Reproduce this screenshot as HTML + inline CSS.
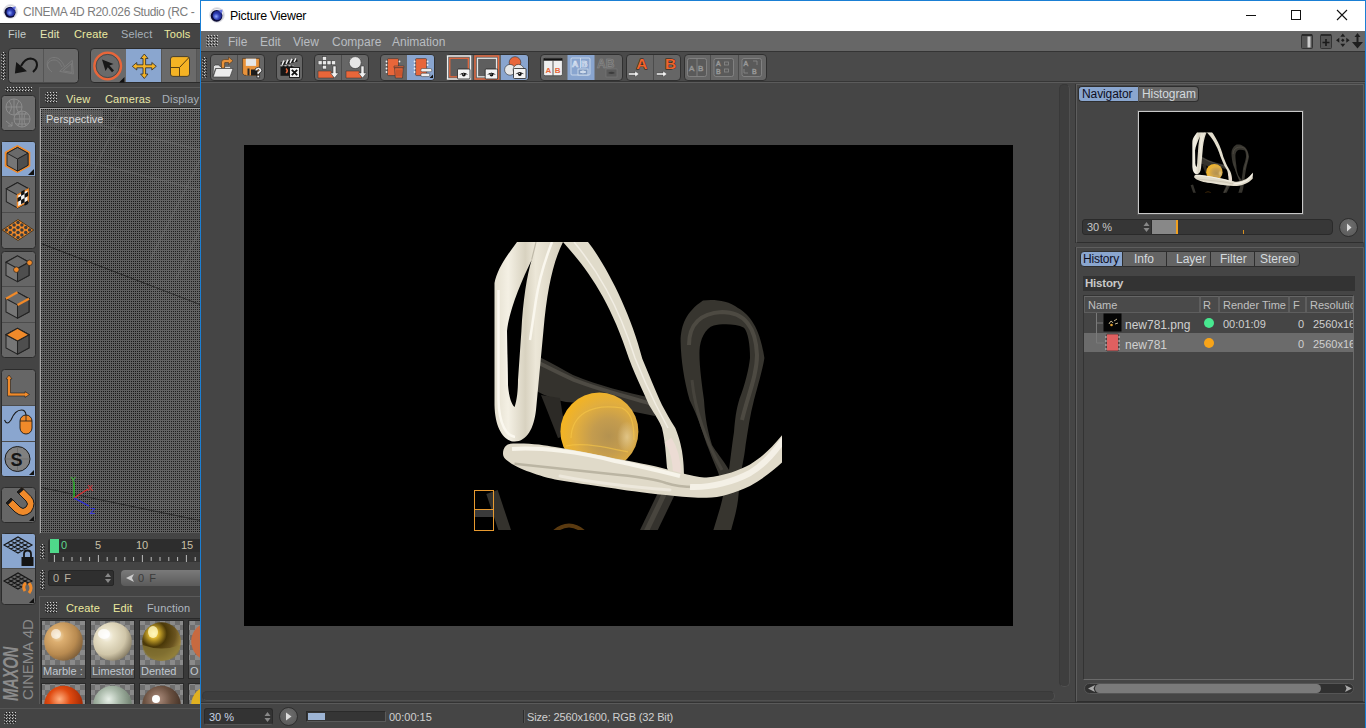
<!DOCTYPE html>
<html><head><meta charset="utf-8">
<style>
*{margin:0;padding:0;box-sizing:border-box}
html,body{width:1366px;height:728px;overflow:hidden;background:#3b3b3b;font-family:"Liberation Sans",sans-serif;font-size:12px}
.a{position:absolute}
.t{position:absolute;white-space:nowrap;line-height:1}
.pvm{color:#b9bdc1;font-size:12px}
.hatch{background:repeating-linear-gradient(135deg,#cfcfcf 0 1px,#2a2a2a 1px 2.4px)}
.hatchv{background:repeating-linear-gradient(135deg,#bdbdbd 0 1px,#333 1px 2.6px)}
</style></head><body>
<svg width="0" height="0" style="position:absolute"><defs><pattern id="hp" width="3" height="3" patternUnits="userSpaceOnUse"><rect x="2" y="0" width="1" height="1" fill="#d4d4d4"/><rect x="1" y="1" width="1" height="1" fill="#1c1c1c"/><rect x="0" y="2" width="1" height="1" fill="#9a9a9a"/></pattern></defs></svg>
<!-- LEFT C4D WINDOW -->
<div class="a" style="left:0;top:0;width:200px;height:23px;background:#fff"></div>
<svg class="a" style="left:2px;top:2.5px" width="17" height="17" viewBox="0 0 18 18">
  <circle cx="9" cy="9" r="7.4" fill="url(#ring)" stroke="#d0d0d8" stroke-width="0.6"/>
  <circle cx="8.6" cy="9.8" r="5.9" fill="#0c0c38"/>
  <circle cx="9.3" cy="9.4" r="4.6" fill="url(#eye)"/>
  <path d="M10.5 4.6 L14.6 3.6 L13.8 7.8Z" fill="#6a78e0"/>
</svg>
<div class="t" style="left:23px;top:5.6px;font-size:12px;color:#7c7c7c;letter-spacing:-0.38px">CINEMA 4D R20.026 Studio (RC - </div>
<div class="a" style="left:0;top:23px;width:200px;height:705px;background:#444"></div><div class="a" style="left:0;top:23px;width:200px;height:1px;background:#303030"></div>
<!-- menu -->
<div class="t" style="left:8px;top:29px;font-size:11px;letter-spacing:0.15px;color:#c5cdcc">File</div>
<div class="t" style="left:40px;top:29px;font-size:11px;letter-spacing:0.15px;color:#e6e6b4">Edit</div>
<div class="t" style="left:74px;top:29px;font-size:11px;letter-spacing:0.15px;color:#eceba0">Create</div>
<div class="t" style="left:121px;top:29px;font-size:11px;letter-spacing:0.15px;color:#a7b0b8">Select</div>
<div class="t" style="left:164px;top:29px;font-size:11px;letter-spacing:0.15px;color:#ecea9e">Tools</div>
<!-- toolbar -->
<svg class="a" style="left:1px;top:52px" width="5" height="28" shape-rendering="crispEdges"><rect width="5" height="28" fill="url(#hp)"/></svg>
<svg class="a" style="left:0;top:44px" width="200" height="44" viewBox="0 0 200 44">
  <g fill="#6a6a6a" stroke="#2c2c2c" stroke-width="1">
    <rect x="8.5" y="4.5" width="70" height="34.5" rx="3.5"/>
    <rect x="90.5" y="4.5" width="120" height="34" rx="3.5"/>
  </g>
  <path d="M43.5 5 V38" stroke="#555"/>
  <rect x="126" y="5" width="35" height="33" fill="#8aa6cf"/>
  <path d="M161.5 5 V38 M196.5 5 V38" stroke="#555"/>
  <!-- undo -->
  <path d="M14.9 29.5 L16.2 17.9 L27 27.3Z" fill="#151515"/>
  <path d="M21 22 Q25 14.5 30.5 14.5 Q37 15 37 21 Q37 24.5 33 28" fill="none" stroke="#151515" stroke-width="2"/>
  <!-- redo disabled -->
  <path d="M52 28 C44 22 47 13.5 54 13.5 C59 13.5 62 17 64.5 22.5 M49.5 25.5 C45 21 49 16 54 16 C58 16 60 19 62 23" fill="none" stroke="#7d7d7d" stroke-width="0.9"/>
  <path d="M72.3 16.3 L73.4 30 L59.7 27.3Z M71.5 19.5 L72 28.5 L63 26.8Z" fill="none" stroke="#7d7d7d" stroke-width="0.9"/>
  <!-- select -->
  <circle cx="107.7" cy="22" r="13.2" fill="none" stroke="#e8663a" stroke-width="2.6"/>
  <circle cx="107.7" cy="22" r="11.6" fill="none" stroke="#3a3a3a" stroke-width="0.7"/>
  <path d="M102 15.5 L113.5 20 L109.5 21.5 L114 26.5 L112 28.3 L107.8 23.3 L105.5 27Z" fill="#181818"/>
  <path d="M124.5 38.5 V33 L119 38.5Z" fill="#111"/>
  <!-- move -->
  <path d="M144.3 10 L148 14.5 H145.6 V20.8 H151.8 V18.5 L156.3 22.3 L151.8 26 V23.8 H145.6 V30 H148 L144.3 34.5 L140.6 30 H143 V23.8 H136.8 V26 L132.3 22.3 L136.8 18.5 V20.8 H143 V14.5 H140.6Z" fill="#f5b324" stroke="#2a2a2a" stroke-width="0.8"/>
  <!-- scale -->
  <rect x="170.5" y="12.6" width="19" height="19.8" rx="2.5" fill="#f5b324" stroke="#2a2a2a" stroke-width="0.8"/>
  <path d="M171 23.5 H179.5 V32 M179.5 23.5 L189 13.5" stroke="#5a4010" stroke-width="1" fill="none"/>
  <rect x="197" y="5" width="3" height="33" fill="#5d5d5d"/>
</svg>
<!-- left icon column -->
<svg class="a" style="left:5px;top:87px" width="27" height="5" shape-rendering="crispEdges"><rect width="27" height="5" fill="url(#hp)"/></svg>
<svg class="a" style="left:0;top:88px" width="40" height="520" viewBox="0 88 40 520">
  <defs>
    <g id="cube"><path d="M0 -11 L10 -5.5 V6 L0 11.5 L-10 6 V-5.5Z" fill="#767676" stroke="#222" stroke-width="0.9"/><path d="M-10 -5.5 L0 0 L10 -5.5 L0 -11Z" fill="#6a6a6a" stroke="#222" stroke-width="0.9"/><path d="M0 0 V11.5 L10 6 V-5.5Z" fill="#4e4e4e" stroke="#222" stroke-width="0.9"/></g>
  </defs>
  <!-- globe -->
  <rect x="1.5" y="95.5" width="34" height="35" rx="3" fill="#6e6e6e" stroke="#2c2c2c"/>
  <g fill="none" stroke="#8c8c8c" stroke-width="1">
    <circle cx="14" cy="107" r="8"/><path d="M6 107 H22 M14 99 V115 M9 101 Q14 107 9 113 M19 101 Q14 107 19 113"/>
    <circle cx="22" cy="119" r="8"/><path d="M14 119 H30 M22 111 V127 M16 114 H28 M16 124 H28 M18 112 Q22 119 18 126 M26 112 Q22 119 26 126"/>
    <path d="M6 121 L12 126 M8 126 H12 V122"/>
  </g>
  <!-- group A -->
  <rect x="1.5" y="141.5" width="34" height="107" rx="3" fill="#666" stroke="#2c2c2c"/>
  <path d="M2 142 H33 Q35 142 35 144 V176 H2Z" fill="#8aa6cf"/>
  <path d="M2 176.5 H35 M2 212.5 H35" stroke="#4c4c4c"/>
  <g transform="translate(17.5,159)"><path d="M0 -14 L12.8 -7 V7.2 L0 14.3 L-12.8 7.2 V-7Z" fill="#f08a2a" /><use href="#cube" transform="scale(1.05)"/></g>
  <path d="M34 175 V169 L28 175Z" fill="#111"/>
  <g transform="translate(17.5,195)" ><g transform="scale(1.12)"><use href="#cube"/>
    <path d="M0 0 V11 L9.5 5.7 V-5.2Z" fill="#f4f4f4" stroke="#f08a2a" stroke-width="1.3"/>
    <path d="M0 2.6 L3.2 0.8 V4.5 L0 6.3Z M6.3 -1 L9.5 -2.8 V0.9 L6.3 2.7Z M3.2 4.5 L6.3 2.7 V6.4 L3.2 8.2Z M3.2 -2.8 L6.3 -4.6 V-1 L3.2 0.8Z M6.3 6.4 L9.5 4.6 V8 L6.3 9.7Z" fill="#111"/>
  </g></g>
  <g transform="translate(18,230)">
    <path d="M0 -10.5 L15.8 0 L0 10.5 L-15.8 0Z" fill="#f08a2a" stroke="#3a2a10" stroke-width="0.8"/>
    <g fill="#3c3c3c"><circle cx="0.00" cy="-7.50" r="1.75"/><circle cx="-3.88" cy="-5.00" r="1.75"/><circle cx="-7.75" cy="-2.50" r="1.75"/><circle cx="-11.62" cy="0.00" r="1.75"/><circle cx="3.88" cy="-5.00" r="1.75"/><circle cx="0.00" cy="-2.50" r="1.75"/><circle cx="-3.88" cy="0.00" r="1.75"/><circle cx="-7.75" cy="2.50" r="1.75"/><circle cx="7.75" cy="-2.50" r="1.75"/><circle cx="3.88" cy="0.00" r="1.75"/><circle cx="0.00" cy="2.50" r="1.75"/><circle cx="-3.88" cy="5.00" r="1.75"/><circle cx="11.62" cy="0.00" r="1.75"/><circle cx="7.75" cy="2.50" r="1.75"/><circle cx="3.88" cy="5.00" r="1.75"/><circle cx="0.00" cy="7.50" r="1.75"/></g>
  </g>
  <!-- group B -->
  <rect x="1.5" y="251.5" width="34" height="106" rx="3" fill="#666" stroke="#2c2c2c"/>
  <path d="M2 286.5 H35 M2 322.5 H35" stroke="#4c4c4c"/>
  <g transform="translate(17.5,268.5) scale(1.15)"><use href="#cube"/><circle cx="-1" cy="1" r="2.4" fill="#f08a2a" stroke="#222" stroke-width="0.6"/><circle cx="10.5" cy="-5" r="2.4" fill="#f08a2a" stroke="#222" stroke-width="0.6"/></g>
  <g transform="translate(17.5,305) scale(1.15)"><use href="#cube"/><path d="M-10 -5.5 L0 -11" stroke="#f08a2a" stroke-width="2"/><path d="M0 0 L10 -5.5" stroke="#f08a2a" stroke-width="2"/></g>
  <g transform="translate(17.5,341) scale(1.15)"><use href="#cube"/><path d="M-10 -5.5 L0 0 L10 -5.5 L0 -11Z" fill="#f08a2a" stroke="#222" stroke-width="0.9"/></g>
  <!-- group C -->
  <rect x="1.5" y="369.5" width="34" height="107" rx="3" fill="#666" stroke="#2c2c2c"/>
  <path d="M2 405 H35 V476 H4 Q2 476 2 474Z" fill="#8aa6cf"/>
  <path d="M2 405.5 H35 M2 441.5 H35" stroke="#4c4c4c"/>
  <path d="M9 375 L12 379 H10.5 V393 H25 V391.5 L29.5 394.5 L25 397.5 V396 H7.5 V379 H6Z" fill="#f08a2a" stroke="#2a2a2a" stroke-width="0.7"/>
  <path d="M4.5 420 Q7 426 11 420 Q15 410 21.5 410 Q25.5 410 26 415" fill="none" stroke="#1a1a1a" stroke-width="1.1"/>
  <rect x="20" y="415" width="12" height="19" rx="6" fill="#f08a2a" stroke="#1a1a1a" stroke-width="0.9"/>
  <path d="M20 421 H32 M26 415 V421" stroke="#1a1a1a" stroke-width="0.8"/>
  <circle cx="17.5" cy="459" r="12.5" fill="#808080" stroke="#1a1a1a" stroke-width="1"/>
  <path d="M17.5 447 V471 M5.5 459 H29.5" stroke="#6a6a6a" stroke-width="0.8"/>
  <text x="10.5" y="466" font-family="Liberation Sans" font-weight="bold" font-size="18" fill="#161616">S</text>
  <path d="M34 475 V470 L29 475Z" fill="#111"/>
  <!-- magnet -->
  <rect x="1.5" y="487.5" width="34" height="35" rx="3" fill="#666" stroke="#2c2c2c"/>
  <path d="M6 503 L11 498 L20 507 Q23 510 26 507 Q29 504 26 501 L17 492 L22 487.5 L31 496.5 Q37 503 31 512 Q23 519 15 512Z" fill="#f08a2a" stroke="#1a1a1a" stroke-width="1"/>
  <path d="M6 503 L11 498 L13 500 L8 505Z M17 492 L22 487.5 L24 489.5 L19 494Z" fill="#1a1a1a"/>
  <path d="M34 521 V516 L29 521Z" fill="#111"/>
  <!-- group D -->
  <rect x="1.5" y="533.5" width="34" height="71" rx="3" fill="#666" stroke="#2c2c2c"/>
  <path d="M2 534 H33 Q35 534 35 536 V568 H2Z" fill="#8aa6cf"/>
  <path d="M2 568.5 H35" stroke="#4c4c4c"/>
  <g fill="none" stroke="#151515" stroke-width="1.1">
    <path d="M4 545 L18 537 L32 545 L18 553Z M7.5 543 L21.5 551 M11 541 L25 549 M14.5 539 L28.5 547 M7.5 547 L21.5 539 M11 549 L25 541 M14.5 551 L28.5 543"/>
    <path d="M4 581 L18 573 L32 581 L18 589Z M7.5 579 L21.5 587 M11 577 L25 585 M14.5 575 L28.5 583 M7.5 583 L21.5 575 M11 585 L25 577 M14.5 587 L28.5 579"/>
  </g>
  <path d="M24 558 V554 Q24 550.5 27.5 550.5 Q31 550.5 31 554 V558" fill="none" stroke="#151515" stroke-width="1.8"/>
  <rect x="21.5" y="557" width="12" height="9" fill="#151515"/>
  <path d="M25 591 Q22 586 26 583" fill="none" stroke="#f08a2a" stroke-width="3"/>
  <path d="M29 583 Q33 588 29 593" fill="none" stroke="#f08a2a" stroke-width="3"/>
  <path d="M34 603 V598 L29 603Z" fill="#111"/>
</svg>
<!-- MAXON logo -->
<div class="t" style="left:0px;top:701px;transform-origin:0 0;transform:rotate(-90deg) scale(0.68,1);font-size:22px;font-weight:bold;font-style:italic;color:#8c8c8c;letter-spacing:-0.5px">MAXON</div>
<div class="t" style="left:20px;top:700px;transform-origin:0 0;transform:rotate(-90deg);font-size:15px;color:#8a8a8a">CINEMA 4D</div>

<!-- viewport panel -->
<div class="a" style="left:39px;top:87px;width:161px;height:447px;background:#444;border-top:1px solid #5a5a5a;border-left:1px solid #5a5a5a"></div>
<svg class="a" style="left:45px;top:92px" width="12" height="11" shape-rendering="crispEdges"><rect width="12" height="11" fill="url(#hp)"/></svg>
<div class="t" style="left:66px;top:94px;font-size:11px;letter-spacing:0.15px;color:#e9e8a8">View</div>
<div class="t" style="left:105px;top:94px;font-size:11px;letter-spacing:0.15px;color:#e9e8a8">Cameras</div>
<div class="t" style="left:162px;top:94px;font-size:11px;letter-spacing:0.15px;color:#a9b1b9">Display</div>
<div class="a" style="left:40px;top:107px;width:160px;height:1px;background:#2a2a2a"></div>
<div class="a" style="left:40px;top:108px;width:160px;height:425px;background:#a5a5a5"></div>
<svg class="a" style="left:41px;top:109px" width="159" height="424" viewBox="0 0 159 424" shape-rendering="crispEdges">
  <defs><pattern id="dots" width="2" height="2" patternUnits="userSpaceOnUse"><rect width="2" height="2" fill="#5f5f5f"/><rect width="1" height="1" fill="#161616"/></pattern></defs>
  <rect width="159" height="424" fill="url(#dots)"/>
</svg>
<svg class="a" style="left:41px;top:109px" width="159" height="424" viewBox="0 0 159 424">
  <path d="M0 134.5 L159 195.5" stroke="#1a1a1a" stroke-width="1" opacity="0.75"/>
  <path d="M0 378.5 L159 411.5" stroke="#1a1a1a" stroke-width="1" opacity="0.65"/>
  <rect x="110" y="0" width="49" height="400" fill="#ffffff" opacity="0.035"/>
  <g stroke="#8a8a8a" stroke-width="1.6" opacity="0.22" fill="none">
    <path d="M1 41 L159 81 M59 16 L159 41 M80 3 L19 136 M159 51 L109 151 M159 120 L135 170"/>
  </g>
  <path d="M33 389 V373" stroke="#1fd01f" stroke-width="1.2"/>
  <path d="M33 389 L47 380" stroke="#e02a2a" stroke-width="1.2"/>
  <path d="M33 389 L48 397" stroke="#2a2ae8" stroke-width="1.2"/>
  <text x="29.5" y="373" font-family="Liberation Sans" font-size="8" fill="#2fd02f">Y</text>
  <text x="46" y="382" font-family="Liberation Sans" font-size="9" fill="#e03030">X</text>
  <text x="49" y="405" font-family="Liberation Sans" font-size="9" fill="#3030f0">Z</text>
</svg>
<div class="a" style="left:43px;top:111px;width:60px;height:15px;background:rgba(100,100,100,0.55)"></div>
<div class="t" style="left:46px;top:114px;font-size:11px;color:#dcdcdc">Perspective</div>

<!-- timeline -->
<svg class="a" style="left:40px;top:544px" width="5" height="15" shape-rendering="crispEdges"><rect width="5" height="15" fill="url(#hp)"/></svg>
<div class="a" style="left:48px;top:539px;width:152px;height:23px;background:#2d2d2d;border-radius:3px 0 0 3px"></div>
<div class="a" style="left:48px;top:552px;width:152px;height:10px;background:#343434"></div>
<div class="a" style="left:50px;top:539px;width:9px;height:14px;background:#4fd88a"></div>
<div class="t" style="left:61px;top:540px;font-size:11px;color:#5fd890">0</div>
<div class="t" style="left:95px;top:540px;font-size:11px;color:#c8c0a8">5</div>
<div class="t" style="left:136px;top:540px;font-size:11px;color:#c8c0a8">10</div>
<div class="t" style="left:181px;top:540px;font-size:11px;color:#c8c0a8">15</div>
<svg class="a" style="left:48px;top:552px" width="152" height="10"><path d="M6.4 3 V10 M15.2 5 V9 M24.0 5 V9 M32.8 5 V9 M41.6 5 V9 M50.4 3 V10 M59.2 5 V9 M68.0 5 V9 M76.8 5 V9 M85.6 5 V9 M94.4 3 V10 M103.2 5 V9 M112.0 5 V9 M120.8 5 V9 M129.6 5 V9 M138.4 3 V10 M147.2 5 V9" stroke="#bbb" stroke-width="1"/></svg>
<!-- frame fields -->
<svg class="a" style="left:40px;top:570px" width="5" height="20" shape-rendering="crispEdges"><rect width="5" height="20" fill="url(#hp)"/></svg>
<div class="a" style="left:48px;top:570px;width:66px;height:16px;background:#2f2f2f;border:1px solid #262626;border-radius:2px"></div>
<div class="t" style="left:53px;top:573px;font-size:11px;color:#b9b0a0;letter-spacing:1px">0 F</div>
<svg class="a" style="left:104px;top:572px" width="8" height="12"><path d="M1 5 L4 1 L7 5Z M1 7 L4 11 L7 7Z" fill="#888"/></svg>
<div class="a" style="left:121px;top:570px;width:79px;height:16px;background:linear-gradient(#7a7a7a,#5a5a5a);border-radius:4px 0 0 4px"></div>
<svg class="a" style="left:124px;top:572px" width="12" height="12"><path d="M2 6 L10 2 L8 6 L10 10Z" fill="#ccc"/></svg>
<div class="t" style="left:138px;top:573px;font-size:11px;color:#3a3a3a;letter-spacing:1px">0 F</div>

<!-- material manager -->
<div class="a" style="left:39px;top:596px;width:161px;height:108px;background:#444;border-top:1px solid #5a5a5a;border-left:1px solid #5a5a5a"></div>
<svg class="a" style="left:45px;top:602px" width="12" height="11" shape-rendering="crispEdges"><rect width="12" height="11" fill="url(#hp)"/></svg>
<div class="t" style="left:66px;top:603px;font-size:11px;letter-spacing:0.15px;color:#ecea9e">Create</div>
<div class="t" style="left:113px;top:603px;font-size:11px;letter-spacing:0.15px;color:#ecea9e">Edit</div>
<div class="t" style="left:147px;top:603px;font-size:11px;letter-spacing:0.15px;color:#b0b8c0">Function</div>
<div class="a" style="left:40px;top:618px;width:160px;height:1px;background:#2a2a2a"></div>
<div class="a" style="left:40px;top:619px;width:160px;height:85px;background:#393939"></div>
<svg class="a" style="left:40px;top:619px" width="160" height="85" viewBox="40 619 160 85">
  <defs>
    <pattern id="chk" width="10" height="10" patternUnits="userSpaceOnUse"><rect width="10" height="10" fill="#6f6f6f"/><rect width="5" height="5" fill="#8a8a8a"/><rect x="5" y="5" width="5" height="5" fill="#8a8a8a"/></pattern>
    <radialGradient id="m1" cx="35%" cy="35%" r="70%"><stop offset="0" stop-color="#f4e0b8"/><stop offset="0.25" stop-color="#dcae70"/><stop offset="0.7" stop-color="#b88a50"/><stop offset="1" stop-color="#80603a"/></radialGradient>
    <radialGradient id="m2" cx="35%" cy="35%" r="70%"><stop offset="0" stop-color="#ffffff"/><stop offset="0.25" stop-color="#ebe4cc"/><stop offset="0.7" stop-color="#cfc5a8"/><stop offset="1" stop-color="#8a8068"/></radialGradient>
    <radialGradient id="m3" cx="30%" cy="30%" r="75%"><stop offset="0" stop-color="#fff2a0"/><stop offset="0.15" stop-color="#e0b830"/><stop offset="0.45" stop-color="#4a3808"/><stop offset="0.75" stop-color="#6a5420"/><stop offset="1" stop-color="#a08840"/></radialGradient>
    <radialGradient id="m4" cx="40%" cy="35%" r="70%"><stop offset="0" stop-color="#ffb080"/><stop offset="0.4" stop-color="#e04a10"/><stop offset="1" stop-color="#902000"/></radialGradient>
    <radialGradient id="m5" cx="40%" cy="35%" r="70%"><stop offset="0" stop-color="#e8f0e8"/><stop offset="0.4" stop-color="#a8b8a8"/><stop offset="1" stop-color="#607060"/></radialGradient>
    <radialGradient id="m6" cx="40%" cy="35%" r="70%"><stop offset="0" stop-color="#b09080"/><stop offset="0.5" stop-color="#6a5040"/><stop offset="1" stop-color="#3a2a20"/></radialGradient>
  </defs>
  <g stroke="#2a2a2a" stroke-width="1">
    <rect x="41.5" y="620.5" width="44" height="58" fill="url(#chk)"/>
    <rect x="90.5" y="620.5" width="44" height="58" fill="url(#chk)"/>
    <rect x="139.5" y="620.5" width="44" height="58" fill="url(#chk)"/>
    <rect x="188.5" y="620.5" width="44" height="58" fill="url(#chk)"/>
    <rect x="41.5" y="683.5" width="44" height="30" fill="url(#chk)"/>
    <rect x="90.5" y="683.5" width="44" height="30" fill="url(#chk)"/>
    <rect x="139.5" y="683.5" width="44" height="30" fill="url(#chk)"/>
    <rect x="188.5" y="683.5" width="44" height="30" fill="url(#chk)"/>
  </g>
  <g fill="#5a5a5a"><rect x="42" y="665" width="43" height="13"/><rect x="91" y="665" width="43" height="13"/><rect x="140" y="665" width="43" height="13"/><rect x="189" y="665" width="43" height="13"/></g>
  <circle cx="63.5" cy="641.5" r="19.3" fill="url(#m1)"/>
  <circle cx="112.5" cy="641.5" r="19.3" fill="url(#m2)"/>
  <circle cx="161.5" cy="641.5" r="19.3" fill="url(#m3)"/>
  <path d="M142.5 645 Q161.5 652 180.5 645 Q180 660 161.5 661 Q143 660 142.5 645Z" fill="#8a7a38" opacity="0.7"/>
  <circle cx="210.5" cy="641.5" r="19.3" fill="#c86a40"/>
  <ellipse cx="56" cy="634" rx="5" ry="5" fill="#fff" opacity="0.6"/>
  <ellipse cx="104" cy="634" rx="6" ry="5" fill="#fff" opacity="0.8"/>
  <ellipse cx="153" cy="632" rx="5" ry="6" fill="#fff8c0" opacity="0.8"/>
  <circle cx="63.5" cy="705" r="19.3" fill="url(#m4)"/>
  <circle cx="112.5" cy="705" r="19.3" fill="url(#m5)"/>
  <circle cx="161.5" cy="705" r="19.3" fill="url(#m6)"/>
  <circle cx="210.5" cy="705" r="19.3" fill="#e0b020"/>
  <ellipse cx="156" cy="699" rx="4" ry="4" fill="#fff"/>
</svg>
<div class="t" style="left:43px;top:666px;font-size:11px;color:#c0c8d0">Marble :</div>
<div class="t" style="left:92px;top:666px;font-size:11px;color:#c0c8d0;width:42px;overflow:hidden">Limestone</div>
<div class="t" style="left:141px;top:666px;font-size:11px;color:#c0c8d0">Dented</div>
<div class="t" style="left:190px;top:666px;font-size:11px;color:#c0c8d0">O</div>
<div class="a" style="left:0;top:704px;width:200px;height:24px;background:#444"></div>
<div class="a" style="left:0;top:708px;width:200px;height:1px;background:#555"></div>
<svg class="a" style="left:4px;top:712px" width="12" height="12" shape-rendering="crispEdges"><rect width="12" height="12" fill="url(#hp)"/></svg>
<!-- PV title bar -->
<div class="a" style="left:200px;top:0;width:1166px;height:728px;border:1px solid #1a7fd4;border-bottom:none;background:#454545"></div>
<div class="a" style="left:201px;top:1px;width:1164px;height:30px;background:#fff"></div>
<svg class="a" style="left:208px;top:6px" width="18" height="18" viewBox="0 0 18 18">
  <defs>
    <radialGradient id="ring" cx="50%" cy="50%" r="50%"><stop offset="70%" stop-color="#fff"/><stop offset="88%" stop-color="#cfd0d8"/><stop offset="100%" stop-color="#f4f4f4"/></radialGradient>
    <radialGradient id="eye" cx="38%" cy="62%" r="65%"><stop offset="0" stop-color="#90a8ff"/><stop offset="0.5" stop-color="#3040b8"/><stop offset="1" stop-color="#182080"/></radialGradient>
  </defs>
  <circle cx="9" cy="9" r="7.4" fill="url(#ring)" stroke="#d0d0d8" stroke-width="0.6"/>
  <circle cx="8.6" cy="9.8" r="5.9" fill="#0c0c38"/>
  <circle cx="9.3" cy="9.4" r="4.6" fill="url(#eye)"/>
  <path d="M10.5 4.6 L14.6 3.6 L13.8 7.8Z" fill="#6a78e0"/>
</svg>
<div class="t" style="left:230px;top:10px;font-size:12.4px;color:#000;letter-spacing:-0.25px">Picture Viewer</div>
<!-- window buttons -->
<div class="a" style="left:1246px;top:15px;width:10px;height:1px;background:#111"></div>
<div class="a" style="left:1291px;top:10px;width:10px;height:10px;border:1px solid #111"></div>
<svg class="a" style="left:1336px;top:9px" width="12" height="12" viewBox="0 0 12 12"><path d="M1 1 L11 11 M11 1 L1 11" stroke="#111" stroke-width="1.1"/></svg>

<!-- PV menu bar -->
<div class="a" style="left:201px;top:31px;width:1164px;height:20px;background:#676767"></div>
<svg class="a" style="left:206px;top:35px" width="12" height="12" shape-rendering="crispEdges"><rect width="12" height="12" fill="url(#hp)"/></svg>
<div class="t pvm" style="left:228px;top:36px">File</div>
<div class="t pvm" style="left:260px;top:36px">Edit</div>
<div class="t pvm" style="left:293px;top:36px">View</div>
<div class="t pvm" style="left:332px;top:36px">Compare</div>
<div class="t pvm" style="left:392px;top:36px">Animation</div>
<!-- right menu icons -->
<svg class="a" style="left:1298px;top:32px" width="68" height="18" viewBox="0 0 68 18">
  <rect x="3.5" y="2.5" width="11" height="14" rx="1" fill="#555" stroke="#333"/>
  <rect x="4" y="2" width="10" height="2" fill="#2a2a2a"/>
  <rect x="9.5" y="4.5" width="3" height="11" fill="#ccc"/>
  <rect x="22.5" y="2.5" width="11" height="14" rx="1" fill="#555" stroke="#333"/>
  <rect x="23" y="2" width="10" height="2" fill="#2a2a2a"/>
  <path d="M28 7 V14 M24.5 10.5 H31.5" stroke="#1a1a1a" stroke-width="1.6"/>
  <path d="M44.8 1.5 L47.3 4.8 L42.3 4.8Z M44.8 15 L47.3 11.7 L42.3 11.7Z M38 8.2 L41.3 5.7 L41.3 10.7Z M51.6 8.2 L48.3 5.7 L48.3 10.7Z M44.8 6.4 L46.6 8.2 L44.8 10 L43 8.2Z" fill="#1e1e1e"/>
  <path d="M59.5 1 L62.5 5 L60.5 5 V10 H65 L59.5 16.5 L54 10 H58.5 V5 H56.5Z" fill="#1e1e1e"/>
</svg>
<div class="a" style="left:201px;top:51px;width:1164px;height:1px;background:#343434"></div>

<!-- PV toolbar -->
<div class="a" style="left:201px;top:52px;width:1164px;height:29px;background:#4a4a4a"></div>
<div class="a" style="left:201px;top:81px;width:1164px;height:1px;background:#363636"></div>
<div class="a" style="left:201px;top:82px;width:1164px;height:1px;background:#5b5b5b"></div>
<svg class="a" style="left:202px;top:57px" width="5" height="21" shape-rendering="crispEdges"><rect width="5" height="21" fill="url(#hp)"/></svg>
<svg class="a" style="left:200px;top:51px" width="580" height="32" viewBox="0 0 580 32">
  <defs>
    <g id="eyebox"><rect x="0" y="0" width="12.5" height="10" rx="1" fill="#f4f4f4" stroke="#222" stroke-width="0.8"/><path d="M1.8 5.8 Q6.25 1.8 10.7 5.8 Q6.25 4 1.8 5.8Z" fill="#111"/><circle cx="6.3" cy="5.6" r="1.9" fill="#111"/><circle cx="5.8" cy="5" r="0.6" fill="#fff"/></g>
  </defs>
  <!-- group backgrounds -->
  <g fill="#666666" stroke="#303030" stroke-width="1">
    <rect x="10.5" y="3.5" width="54" height="26" rx="3.5"/>
    <rect x="76.5" y="3.5" width="26" height="26" rx="3.5"/>
    <rect x="114.5" y="3.5" width="54" height="26" rx="3.5"/>
    <rect x="180.5" y="3.5" width="54" height="26" rx="3.5"/>
    <rect x="246.5" y="3.5" width="82" height="26" rx="3.5"/>
    <rect x="340.5" y="3.5" width="82" height="26" rx="3.5"/>
    <rect x="426.5" y="3.5" width="54" height="26" rx="3.5"/>
    <rect x="484.5" y="3.5" width="82" height="26" rx="3.5"/>
  </g>
  <!-- highlighted buttons -->
  <path d="M207 4 H231 Q234 4 234 7 V26 Q234 29 231 29 H207 Z" fill="#89a5cf"/>
  <path d="M301 4 H325 Q328 4 328 7 V26 Q328 29 325 29 H301 Z" fill="#89a5cf"/>
  <rect x="367.5" y="4" width="27" height="25" fill="#89a5cf"/>
  <!-- dividers -->
  <g stroke="#4c4c4c" stroke-width="1">
    <path d="M37.5 4 V29 M141.5 4 V29 M273.5 4 V29 M453.5 4 V29 M510.5 4 V29 M538.5 4 V29"/>
  </g>
  <!-- open -->
  <g transform="translate(10,3)">
    <path d="M3 22.5 L3.5 12.5 L5 11 L9 11 L10 12.5 L11.5 12.5 V14.5 L5.5 14.5 Z" fill="#e2e2e2" stroke="#333" stroke-width="0.6"/><rect x="14.6" y="12.3" width="6" height="2.2" fill="#d6d6d6" stroke="#333" stroke-width="0.5"/>
    <path d="M11.5 14 V8.5 Q11.5 5.5 14.5 5.5 H18.5 V3 L23 6.8 L18.5 10.5 V8.5 H15 Q14.6 8.5 14.6 9 V14Z" fill="#e8923a" stroke="#3a2a1a" stroke-width="0.5"/>
    <path d="M3.2 23 L6 14.5 L23 14.5 L20 23 Z" fill="#ececec" stroke="#333" stroke-width="0.6"/>
  </g>
  <!-- save -->
  <g transform="translate(37,3)">
    <path d="M5.6 4.4 H22.4 V21.3 H7.5 L5.6 19.5 Z" fill="#e8923a" stroke="#3b2a1a" stroke-width="0.6"/>
    <rect x="8.8" y="4.6" width="10.3" height="7.3" fill="#e6e6e6"/>
    <rect x="9" y="14" width="10" height="7.3" fill="#e8923a"/>
    <rect x="10.5" y="14.5" width="2" height="6.8" fill="#2a2a2a"/>
    <rect x="14" y="15.5" width="6" height="6" fill="#1c1c1c"/>
    <path d="M17.8 16.8 Q17.8 13.3 21.3 13.3 Q24.8 13.3 24.8 16.3 Q24.8 18.3 22.6 19 V20.3 H20 V17.8 Q22.2 17.2 22.2 16.3 Q22.2 15.6 21.3 15.6 Q20.4 15.6 20.4 16.8Z M20 21.2 H22.6 V23.8 H20Z" fill="#f6f6f6" stroke="#111" stroke-width="0.7"/>
  </g>
  <!-- clapper -->
  <g transform="translate(76,3)">
    <path d="M4.5 8.5 L21 4.5 L21.5 7.5 L5 11.5Z" fill="#111"/>
    <path d="M6 10.8 L8 6.5 M10 9.8 L12 5.6 M14 8.8 L16 4.8 M18 7.8 L20 4.3" stroke="#eee" stroke-width="1.6"/>
    <rect x="4.5" y="11.8" width="13" height="10" fill="#151515"/>
    <path d="M4.5 11.8 H17.5" stroke="#eee" stroke-width="1" stroke-dasharray="2 2"/>
    <path d="M10 14.5 Q12.5 16.8 10 19" stroke="#e8663a" stroke-width="1.6" fill="none"/>
    <rect x="13.5" y="13.5" width="10" height="10" fill="#f2f2f2" stroke="#111" stroke-width="0.9"/>
    <path d="M15.8 15.8 L21.2 21.2 M21.2 15.8 L15.8 21.2" stroke="#111" stroke-width="1.8"/>
  </g>
  <!-- render region -->
  <g transform="translate(114,3)">
    <g fill="#e9e9e9" stroke="#333" stroke-width="0.5">
      <rect x="8.5" y="2.7" width="4" height="3.5"/><rect x="8.5" y="6.8" width="4" height="4"/><rect x="8.5" y="11.4" width="4" height="3.6"/>
      <rect x="4.1" y="6.8" width="4" height="4"/><rect x="13" y="6.8" width="4" height="4"/><rect x="17.6" y="6.8" width="4" height="4"/>
    </g>
    <path d="M4 17 H17 L20 24 H4Z" fill="#e8663a" stroke="#333" stroke-width="0.5"/>
    <path d="M19 12 H22 V19 H24.5 L20.5 24 L16.5 19 H19Z" fill="#f0f0f0" stroke="#333" stroke-width="0.5"/>
  </g>
  <g transform="translate(141,3)">
    <circle cx="14.2" cy="8.6" r="6" fill="#e6e6e6" stroke="#333" stroke-width="0.6"/>
    <path d="M5 17 H18 L21 24 H5Z" fill="#e8663a" stroke="#333" stroke-width="0.5"/>
    <path d="M20 12 H23 V19 H25.5 L21.5 24 L17.5 19 H20Z" fill="#f0f0f0" stroke="#333" stroke-width="0.5"/>
  </g>
  <!-- delete / export notebook -->
  <g transform="translate(180,3)">
    <rect x="7.5" y="4.6" width="11" height="17" rx="1" fill="#e8663a" stroke="#333" stroke-width="0.6"/>
    <g fill="#eee"><circle cx="6.5" cy="7.5" r="0.9"/><circle cx="6.5" cy="11" r="0.9"/><circle cx="6.5" cy="14.5" r="0.9"/><circle cx="6.5" cy="18" r="0.9"/><circle cx="19.5" cy="7.5" r="0.9"/></g>
    <path d="M14 12 H23.8 V13.8 H14Z" fill="#e8663a" stroke="#333" stroke-width="0.5"/>
    <path d="M14.6 13.8 H23.2 L22.5 24 H15.3Z" fill="#e8663a" stroke="#333" stroke-width="0.6"/>
    <path d="M17 15.5 V22.5 M19 15.5 V22.5 M21 15.5 V22.5" stroke="#9a3a1a" stroke-width="0.7"/>
  </g>
  <g transform="translate(207,3)">
    <rect x="8.6" y="4.6" width="11" height="17" rx="1" fill="#e8663a" stroke="#333" stroke-width="0.6"/>
    <g fill="#eee"><circle cx="7.6" cy="7.5" r="0.9"/><circle cx="7.6" cy="11" r="0.9"/><circle cx="7.6" cy="14.5" r="0.9"/><circle cx="7.6" cy="18" r="0.9"/><circle cx="20.6" cy="7.5" r="0.9"/><circle cx="20.6" cy="11" r="0.9"/></g>
    <rect x="13.8" y="14.5" width="11" height="3.3" rx="1.5" fill="#eee" stroke="#333" stroke-width="0.5"/>
    <rect x="13.8" y="19.3" width="9" height="3.3" rx="1.5" fill="#eee" stroke="#333" stroke-width="0.5"/>
    <path d="M26 24 V20.5 L22.5 24Z" fill="#111"/>
  </g>
  <!-- compare frames -->
  <g transform="translate(246,3)">
    <rect x="1.5" y="2" width="23" height="23" fill="none" stroke="#f0f0f0" stroke-width="1.4"/>
    <rect x="3.8" y="4.3" width="18.5" height="18.5" fill="#5e5e5e" stroke="#e8663a" stroke-width="1.2"/>
    <use href="#eyebox" x="11.5" y="15"/>
  </g>
  <g transform="translate(273,3)">
    <rect x="2" y="2" width="23.5" height="23" fill="none" stroke="#e8663a" stroke-width="1.4"/>
    <rect x="4.5" y="4.3" width="19" height="18.5" fill="#5e5e5e" stroke="#e6e6e6" stroke-width="1.2"/>
    <use href="#eyebox" x="12.2" y="15"/>
  </g>
  <g transform="translate(301,3)">
    <circle cx="14" cy="8.5" r="5.8" fill="#e8663a" stroke="#333" stroke-width="0.6"/>
    <circle cx="9" cy="15.8" r="5.4" fill="#e8e8e8" stroke="#333" stroke-width="0.6"/>
    <circle cx="17.5" cy="15.8" r="5.4" fill="#e8e8e8" stroke="#333" stroke-width="0.6"/>
    <use href="#eyebox" x="12.5" y="14.5"/>
  </g>
  <!-- AB -->
  <g transform="translate(340,3)">
    <rect x="3.6" y="4.3" width="18.8" height="17.4" rx="1.5" fill="#efefef" stroke="#222" stroke-width="0.6"/>
    <rect x="3.6" y="4.3" width="18.8" height="2.4" fill="#111"/>
    <path d="M13 6.7 V21.7" stroke="#333" stroke-width="0.8"/>
    <text x="5.5" y="18.5" font-family="Liberation Sans" font-weight="bold" font-size="8" fill="#e8663a">A</text>
    <text x="14.8" y="18.5" font-family="Liberation Sans" font-weight="bold" font-size="8" fill="#e8663a">B</text>
  </g>
  <g transform="translate(367,3)" fill="none" stroke="#dfe8f4" stroke-width="0.8" opacity="0.9">
    <rect x="4" y="4" width="19" height="17" rx="1"/>
    <path d="M13.5 4 V14"/>
    <text x="5" y="13" font-family="Liberation Sans" font-weight="bold" font-size="8.5" fill="#89a5cf" stroke="#e4ecf7" stroke-width="0.7">A</text>
    <text x="14.3" y="13" font-family="Liberation Sans" font-weight="bold" font-size="8.5" fill="#89a5cf" stroke="#e4ecf7" stroke-width="0.7">B</text>
    <rect x="11" y="15" width="10" height="6" fill="#7e98bf"/>
    <path d="M13 18 Q16 15.5 19 18 Q16 20 13 18Z" fill="#cfdcee"/>
  </g>
  <g transform="translate(394,3)">
    <text x="3" y="14" font-family="Liberation Sans" font-weight="bold" font-size="12" fill="#6c6c6c" stroke="#8a8a8a" stroke-width="0.6">AB</text>
    <rect x="12" y="15" width="11" height="8" fill="#5a5a5a" stroke="#7a7a7a" stroke-width="0.6"/>
    <path d="M14 19 Q17.5 16.5 21 19 Q17.5 21 14 19Z" fill="#3c3c3c"/>
  </g>
  <!-- A -> B -->
  <g transform="translate(426,3)">
    <text x="10.3" y="15" font-family="Liberation Sans" font-weight="bold" font-size="15.5" fill="#f0642c" stroke="#2a1808" stroke-width="0.9" paint-order="stroke">A</text>
    <path d="M2.5 19 H9 V17 L13 20 L9 23 V21 H2.5Z" fill="#f2f2f2" stroke="#333" stroke-width="0.4"/>
  </g>
  <g transform="translate(453,3)">
    <text x="12" y="15" font-family="Liberation Sans" font-weight="bold" font-size="15.5" fill="#f0642c" stroke="#2a1808" stroke-width="0.9" paint-order="stroke">B</text>
    <path d="M3.5 19 H10 V17 L14 20 L10 23 V21 H3.5Z" fill="#f2f2f2" stroke="#333" stroke-width="0.4"/>
  </g>
  <!-- disabled compare modes -->
  <g fill="none" stroke="#8a8a8a" stroke-width="0.8">
    <g transform="translate(484,3)"><rect x="3.5" y="4.5" width="19" height="18" rx="2" fill="#5a5a5a"/><path d="M13 4.5 V22.5"/><text x="5" y="17" font-family="Liberation Sans" font-size="8" fill="#5a5a5a" stroke="#999" stroke-width="0.6">A</text><text x="14" y="17" font-family="Liberation Sans" font-size="8" fill="#5a5a5a" stroke="#999" stroke-width="0.6">B</text></g>
    <g transform="translate(510,3)"><rect x="4" y="4.5" width="19.5" height="18" rx="2" fill="#5a5a5a"/><text x="6" y="12" font-family="Liberation Sans" font-size="7" fill="#5a5a5a" stroke="#999" stroke-width="0.6">A</text><text x="6" y="20" font-family="Liberation Sans" font-size="7" fill="#5a5a5a" stroke="#999" stroke-width="0.6">B</text><rect x="14.5" y="8" width="4" height="3"/><rect x="14.5" y="15" width="4" height="3"/></g>
    <g transform="translate(538,3)"><rect x="4" y="4.5" width="19.5" height="18" rx="2" fill="#5a5a5a"/><text x="5.5" y="12" font-family="Liberation Sans" font-size="7" fill="#5a5a5a" stroke="#999" stroke-width="0.6">A</text><text x="14" y="20" font-family="Liberation Sans" font-size="7" fill="#5a5a5a" stroke="#999" stroke-width="0.6">B</text><path d="M15 7 H19 V11 M6 15 V19 H10"/></g>
  </g>
</svg>
<!-- PV main area -->
<div class="a" style="left:244px;top:145px;width:769px;height:481px;background:#000"></div>
<!-- vertical scrollbar -->
<div class="a" style="left:1059px;top:84px;width:11px;height:603px;background:#3e3e3e;border:1px solid #505050;border-left-color:#393939;border-top-color:#393939;border-radius:5px"></div>
<!-- horizontal scrollbar -->
<div class="a" style="left:202px;top:691px;width:853px;height:10px;background:#3e3e3e;border:1px solid #505050;border-left-color:#393939;border-top-color:#393939;border-radius:5px"></div>
<div class="a" style="left:201px;top:702px;width:1164px;height:1px;background:#333"></div>
<div class="a" style="left:201px;top:703px;width:1164px;height:1px;background:#5a5a5a"></div>
<!-- status bar -->
<div class="a" style="left:204px;top:708px;width:69px;height:17px;background:#333;border:1px solid #2a2a2a;border-bottom-color:#555;border-radius:3px"></div>
<div class="t" style="left:209px;top:712px;font-size:11px;color:#c8d4e4">30 %</div>
<svg class="a" style="left:264px;top:711px" width="7" height="12"><path d="M0.5 5 L3.5 1 L6.5 5Z M0.5 7 L3.5 11 L6.5 7Z" fill="#888"/></svg>
<div class="a" style="left:279px;top:707px;width:19px;height:19px;border-radius:50%;background:radial-gradient(circle at 50% 40%,#6e6e6e,#555);border:1px solid #2e2e2e"></div>
<svg class="a" style="left:285px;top:712px" width="8" height="9"><path d="M1 0.5 L6.5 4.5 L1 8.5Z" fill="#ddd"/></svg>
<div class="a" style="left:306px;top:711px;width:80px;height:11px;background:#353535;border:1px solid #2a2a2a;border-bottom-color:#5a5a5a;border-right-color:#5a5a5a"></div>
<div class="a" style="left:308px;top:713px;width:17px;height:7px;background:#9db4d4"></div>
<div class="t" style="left:389px;top:712px;font-size:11px;color:#d0d0d0">00:00:15</div>
<div class="a" style="left:523px;top:710px;width:1px;height:13px;background:#2c2c2c;box-shadow:1px 0 0 #555"></div>
<div class="t" style="left:527px;top:712px;font-size:11px;color:#d0d0d0;letter-spacing:-0.15px">Size: 2560x1600, RGB (32 Bit)</div>
<!-- right panel -->
<div class="a" style="left:1076px;top:84px;width:288px;height:159px;border:1px solid #5e5e5e;border-right-color:#5e5e5e;border-bottom-color:#2e2e2e;box-shadow:-1px 0 0 #333"></div>
<div class="a" style="left:1078px;top:86px;width:60px;height:16px;background:#8aa6cf;border-radius:4px 0 0 4px;border:1px solid #2e2e2e;border-right:none"></div>
<div class="a" style="left:1138px;top:86px;width:61px;height:16px;background:#666;border-radius:0 4px 4px 0;border:1px solid #2e2e2e;border-left:1px solid #555"></div>
<div class="t" style="left:1082px;top:88px;color:#0e0e1e;letter-spacing:-0.1px">Navigator</div>
<div class="t" style="left:1142px;top:88px;color:#d4dade;letter-spacing:-0.1px">Histogram</div>
<div class="a" style="left:1138px;top:111px;width:165px;height:103px;background:#000;border:1px solid #c8c8c8;box-shadow:0 0 0 1px #555"></div>
<!-- zoom row -->
<div class="a" style="left:1082px;top:219px;width:70px;height:16px;background:#363636;border:1px solid #2a2a2a;border-radius:3px 0 0 3px"></div>
<div class="t" style="left:1087px;top:222px;font-size:11px;color:#c8c8c8">30 %</div>
<svg class="a" style="left:1143px;top:221px" width="7" height="12"><path d="M0.5 5 L3.5 1 L6.5 5Z M0.5 7 L3.5 11 L6.5 7Z" fill="#888"/></svg>
<div class="a" style="left:1151px;top:219px;width:182px;height:16px;background:#373737;border:1px solid #2a2a2a;border-radius:0 4px 4px 0"></div>
<div class="a" style="left:1152px;top:220px;width:25px;height:14px;background:#888"></div>
<div class="a" style="left:1176px;top:220px;width:2px;height:14px;background:#f0a020"></div>
<div class="a" style="left:1243px;top:230px;width:1px;height:4px;background:#d89020"></div>
<div class="a" style="left:1339px;top:218px;width:19px;height:19px;border-radius:50%;background:radial-gradient(circle at 50% 40%,#707070,#565656);border:1px solid #2e2e2e"></div>
<svg class="a" style="left:1346px;top:223px" width="7" height="9"><path d="M1 0.5 L5.5 4.5 L1 8.5Z" fill="#ddd"/></svg>

<!-- history panel -->
<div class="a" style="left:1076px;top:247px;width:288px;height:455px;border:1px solid #5e5e5e;border-bottom-color:#2e2e2e;box-shadow:-1px 0 0 #333"></div>
<div class="a" style="left:1080px;top:251px;width:220px;height:16px;background:#646464;border:1px solid #2e2e2e;border-radius:4px"></div>
<div class="a" style="left:1080px;top:251px;width:43px;height:16px;background:#8aa6cf;border:1px solid #2e2e2e;border-radius:4px 0 0 4px"></div>
<div class="a" style="left:1166px;top:252px;width:1px;height:14px;background:#2e2e2e"></div>
<div class="a" style="left:1210px;top:252px;width:1px;height:14px;background:#2e2e2e"></div>
<div class="a" style="left:1254px;top:252px;width:1px;height:14px;background:#2e2e2e"></div>
<div class="t" style="left:1083px;top:253px;color:#0e0e1e;letter-spacing:-0.2px">History</div>
<div class="t" style="left:1134px;top:253px;color:#d4dade">Info</div>
<div class="t" style="left:1176px;top:253px;color:#d4dade">Layer</div>
<div class="t" style="left:1220px;top:253px;color:#d4dade">Filter</div>
<div class="t" style="left:1260px;top:253px;color:#d4dade">Stereo</div>
<div class="a" style="left:1083px;top:276px;width:272px;height:15px;background:#333"></div>
<div class="t" style="left:1085px;top:278px;font-size:11.5px;font-weight:bold;color:#c8c8c8;letter-spacing:-0.2px">History</div>
<!-- table -->
<div class="a" style="left:1083px;top:295px;width:271px;height:385px;background:#454545;border:1px solid #6a6a6a;border-left-color:#333;border-top-color:#333"></div>
<div class="a" style="left:1084px;top:296px;width:116px;height:17px;background:#4a4a4a;border:1px solid #5e5e5e;border-top-color:#666"></div>
<div class="a" style="left:1200px;top:296px;width:19px;height:17px;background:#4a4a4a;border:1px solid #5e5e5e;border-top-color:#666"></div>
<div class="a" style="left:1219px;top:296px;width:70px;height:17px;background:#4a4a4a;border:1px solid #5e5e5e;border-top-color:#666"></div>
<div class="a" style="left:1289px;top:296px;width:17px;height:17px;background:#4a4a4a;border:1px solid #5e5e5e;border-top-color:#666"></div>
<div class="a" style="left:1306px;top:296px;width:47px;height:17px;background:#4a4a4a;border:1px solid #5e5e5e;border-top-color:#666"></div>
<div class="t" style="left:1088px;top:300px;font-size:11px;color:#c0c0c0">Name</div>
<div class="t" style="left:1203px;top:300px;font-size:11px;color:#c0c0c0">R</div>
<div class="t" style="left:1223px;top:300px;font-size:11px;color:#c0c0c0">Render Time</div>
<div class="t" style="left:1293px;top:300px;font-size:11px;color:#c0c0c0">F</div>
<div class="t" style="left:1310px;top:300px;font-size:11px;color:#c0c0c0;width:43px;overflow:hidden">Resolution</div>
<div class="a" style="left:1084px;top:333px;width:269px;height:19px;background:#6b6b6b"></div>
<svg class="a" style="left:1084px;top:313px" width="40" height="40">
  <path d="M12.5 0 V30 H20" stroke="#7a7a7a" stroke-width="1" fill="none"/>
  <path d="M12.5 10 H19" stroke="#7a7a7a" stroke-width="1"/>
  <rect x="19.5" y="0.5" width="18" height="18" fill="#050505"/>
  <path d="M25 11 Q27 6 29 10 M30 8 L33 6 M31 11 L34 10" stroke="#d8c8a0" stroke-width="0.9" fill="none"/>
  <circle cx="27.5" cy="12" r="1.3" fill="#e0a030"/>
  <rect x="22.5" y="21" width="12" height="17" rx="1" fill="#e06060" stroke="#2e2e2e" stroke-width="0.7"/>
  <g fill="#e8e8e8"><circle cx="22" cy="24" r="0.7"/><circle cx="22" cy="28" r="0.7"/><circle cx="22" cy="32" r="0.7"/><circle cx="22" cy="36" r="0.7"/><circle cx="35" cy="24" r="0.7"/><circle cx="35" cy="28" r="0.7"/><circle cx="35" cy="32" r="0.7"/><circle cx="35" cy="36" r="0.7"/></g>
</svg>
<div class="t" style="left:1125px;top:319px;color:#d0d0d0">new781.png</div>
<div class="t" style="left:1125px;top:339px;color:#d0d0d0">new781</div>
<div class="a" style="left:1204px;top:318px;width:10px;height:10px;border-radius:50%;background:#48e890"></div>
<div class="a" style="left:1204px;top:338px;width:10px;height:10px;border-radius:50%;background:#f8a418"></div>
<div class="t" style="left:1223px;top:319px;font-size:11px;color:#d0d0d0">00:01:09</div>
<div class="t" style="left:1298px;top:319px;font-size:11px;color:#d0d0d0">0</div>
<div class="t" style="left:1298px;top:339px;font-size:11px;color:#d0d0d0">0</div>
<div class="t" style="left:1313px;top:319px;font-size:11px;color:#d0d0d0;width:40px;overflow:hidden">2560x1600</div>
<div class="t" style="left:1313px;top:339px;font-size:11px;color:#d0d0d0;width:40px;overflow:hidden">2560x1600</div>
<!-- h scrollbar -->
<div class="a" style="left:1084px;top:683px;width:270px;height:11px;background:#303030;border-radius:6px;border:1px solid #555"></div>
<div class="a" style="left:1095px;top:684px;width:226px;height:9px;background:#7a7a7a;border-radius:5px"></div>
<svg class="a" style="left:1086px;top:683px" width="268" height="11"><path d="M2 5.5 L9 2 L7.5 5.5 L9 9Z M266 5.5 L259 2 L260.5 5.5 L259 9Z" fill="#aaa"/></svg>
<svg class="a" style="left:244px;top:145px" width="769" height="481" viewBox="244 145 769 481">
  <defs>
    <clipPath id="rclip"><rect x="474" y="242" width="308" height="288"/></clipPath>
    <radialGradient id="gold" cx="62%" cy="56%" r="62%"><stop offset="0" stop-color="#b49250"/><stop offset="0.35" stop-color="#c49c4e"/><stop offset="0.7" stop-color="#e2ae3e"/><stop offset="1" stop-color="#f4b422"/></radialGradient>
    <radialGradient id="ghl"><stop offset="0" stop-color="#ecd49c" stop-opacity="0.7"/><stop offset="1" stop-color="#ecd49c" stop-opacity="0"/></radialGradient>
    <linearGradient id="blob" x1="0" y1="0" x2="0" y2="1"><stop offset="0" stop-color="#f2ede0"/><stop offset="0.4" stop-color="#e6e0cf"/><stop offset="0.55" stop-color="#d2ccbb"/><stop offset="0.75" stop-color="#e8e2d2"/><stop offset="1" stop-color="#ddd7c6"/></linearGradient>
    <linearGradient id="ucol" x1="0" y1="0" x2="1" y2="0"><stop offset="0" stop-color="#e4dfcf"/><stop offset="0.2" stop-color="#f4f0e4"/><stop offset="0.45" stop-color="#d8d2c0"/><stop offset="0.6" stop-color="#ece7d8"/><stop offset="1" stop-color="#d4cebc"/></linearGradient>
    <g id="render">
      <g clip-path="url(#rclip)">
        <!-- dark band behind U and sphere -->
        <path d="M507 340 C530 352 555 365 573 375 C600 386 625 392 652 398 L655 416 C625 410 595 403 566 402 C545 398 525 385 507 372 Z" fill="#34322d"/>
        <path d="M507 348 C530 358 552 370 574 380 C600 390 625 396 652 404" stroke="#4e4b44" stroke-width="4" fill="none"/>
        <path d="M541 395 L560 398 L566 436 L558 438Z" fill="#2c2a26"/>
        <!-- dark loop -->
        <g fill="none">
          <path fill-rule="evenodd" d="M680.6 341.4 C681 325 686 312 703 300.6 C712 299 728 300 738 308 C750 315 760 328 764.4 358 C763 368 758 385 754 400 C750 415 748 430 745.6 445 C744 460 741 470 740 480 L738 500 C736 515 732 525 730 535 L712 535 C716 520 722 505 724 490 L718 472 C712 458 710 452 707 445 C702 430 698 417 689.6 400 C684 380 681 360 680.6 341.4 Z M699.5 350.4 C700 340 705 328 713.8 325.5 C720 324 735 323 744 327.8 C748 332 750 345 750 358 C749 368 745 385 739.5 398.8 C736 410 735 420 734 432 C732 445 731 455 729 470 C722 458 716 452 712 445 C708 432 705 418 704 400 C702 385 699 365 699.5 350.4 Z" fill="#37352f"/>
          <path d="M689 345 C689 325 700 313 722 312 C745 312 756 328 757 355 C757 375 748 395 742 420" stroke="#504d45" stroke-width="4" opacity="0.9"/>
          <path d="M692 380 C695 410 705 440 722 470" stroke="#4a4740" stroke-width="3" opacity="0.8"/>
          <path d="M672 482 L646 536" stroke="#34322d" stroke-width="16"/>
          <path d="M670 482 L644 536" stroke="#48453e" stroke-width="5"/>
          <path d="M492 492 L506 534" stroke="#34322d" stroke-width="12"/>
        </g>
        <!-- U loop -->
        <path d="M517 242 C505 258 497 270 494.5 283 L494.5 405 C495 430 505 441.5 514.6 441.5 C527 441.5 534 428 536 410 L543.5 330 C547 290 553 262 563 242 Z" fill="url(#ucol)"/>
        <path d="M531.7 259.7 C522 280 509 310 507 331 L508 385 C509 398 512 405 514.6 407 C517 400 518 390 518 380 L521.4 331 C523 300 527 275 531.7 259.7 Z" fill="#000"/>
        <path d="M536 242 L531.7 259.7" stroke="#bfb9a8" stroke-width="1.2"/>
        <path d="M498.5 290 L498.5 400 C499 425 507 436 515 437" stroke="#fbf8ef" stroke-width="2.5" fill="none"/>
        <path d="M530 340 L536 300 C539 280 545 260 552 242" stroke="#faf7ee" stroke-width="2.5" fill="none"/>
        <path d="M506 331 L507 385" stroke="#f8f4ea" stroke-width="1.2" fill="none"/>
        <!-- diagonal tube -->
        <path d="M563 242 C588 270 610 300 629 358.8 C637 380 645 395 649 405 C655 415 660 422 662 428 C665 440 666 455 667 467.7 L672 480 L684 478 C684 465 683 458 682 451 C680 440 678 435 675.3 428 C670 420 666 412 662 405 C655 390 648 372 642.3 358.8 C630 310 604 262 588 242 Z" fill="#e0dbca"/>
        <path d="M574 242 C597 270 617 302 635 358 C643 378 650 393 656 405 L668 428" stroke="#f6f3ea" stroke-width="1.5" fill="none" opacity="0.8"/>
        <path d="M668 440 C675 450 677 462 677 476" stroke="#ecdcd4" stroke-width="8" fill="none"/>
      </g>
      <!-- gold sphere -->
      <circle cx="599.4" cy="431.5" r="39" fill="url(#gold)"/>
      <ellipse cx="627" cy="437" rx="10" ry="16" fill="url(#ghl)"/><path d="M571 438 C572 415 590 403 622 408 C630 412 634 420 634 440 M566 446 C585 442 610 448 628 452" stroke="#f8c848" stroke-width="1.2" fill="none" opacity="0.6"/>
      <g clip-path="url(#rclip)">
        <!-- bottom ellipse + tail -->
        <path d="M503 454 C503 446 508 443.5 513 443.5 C530 443 545 445 555 447 C580 451 600 455 615 458.5 C635 462 650 465 660 467.5 L683 473.5 C695 476 700 477.6 706.5 477.6 C725 476 740 470 750 464.6 C765 455 775 445 790 425 L795 450 C785 460 770 475 750 486 C735 493 720 497.8 706.5 497.8 C695 497.8 685 497 675 496 C650 494 630 491 615 488.6 C590 485 570 482 555 479.5 C535 475 515 467 508.5 461.5 C505 459 503 457 503 454 Z" fill="#e0dac9"/>
        <path d="M512 449 C540 447 580 452 615 461 C640 466 660 471 680 476" stroke="#f7f4ea" stroke-width="4" fill="none"/>
        <path d="M514.5 463.8 C545 467 585 471.3 620 475 C640 477 655 479 666 483 C675 486 685 487 695 487" stroke="#bbb5a3" stroke-width="2.5" fill="none"/>
        <path d="M560 476 C590 482 630 487 670 490" stroke="#ede8dc" stroke-width="3" fill="none" stroke-linecap="round"/>
        <path d="M690 487 C712 488 735 481 750 473 C765 464 775 452 792 428" stroke="#f4f0e6" stroke-width="6" fill="none"/>
        <path d="M553 533 C563 523 575 523 585 533" stroke="#5a3a10" stroke-width="4" fill="none"/>
      </g>
    </g>
  </defs>
  <use href="#render"/>
  <rect x="474.5" y="490.5" width="19" height="40" fill="none" stroke="#e89a30" stroke-width="1"/>
  <path d="M475 509.5 H493" stroke="#e89a30" stroke-width="1"/>
  <rect x="475" y="510" width="18" height="7" fill="#3a3a3a"/>
</svg>
<svg class="a" style="left:1139px;top:112px" width="163" height="101" viewBox="244 145 769 481"><use href="#render"/></svg>
</body></html>
